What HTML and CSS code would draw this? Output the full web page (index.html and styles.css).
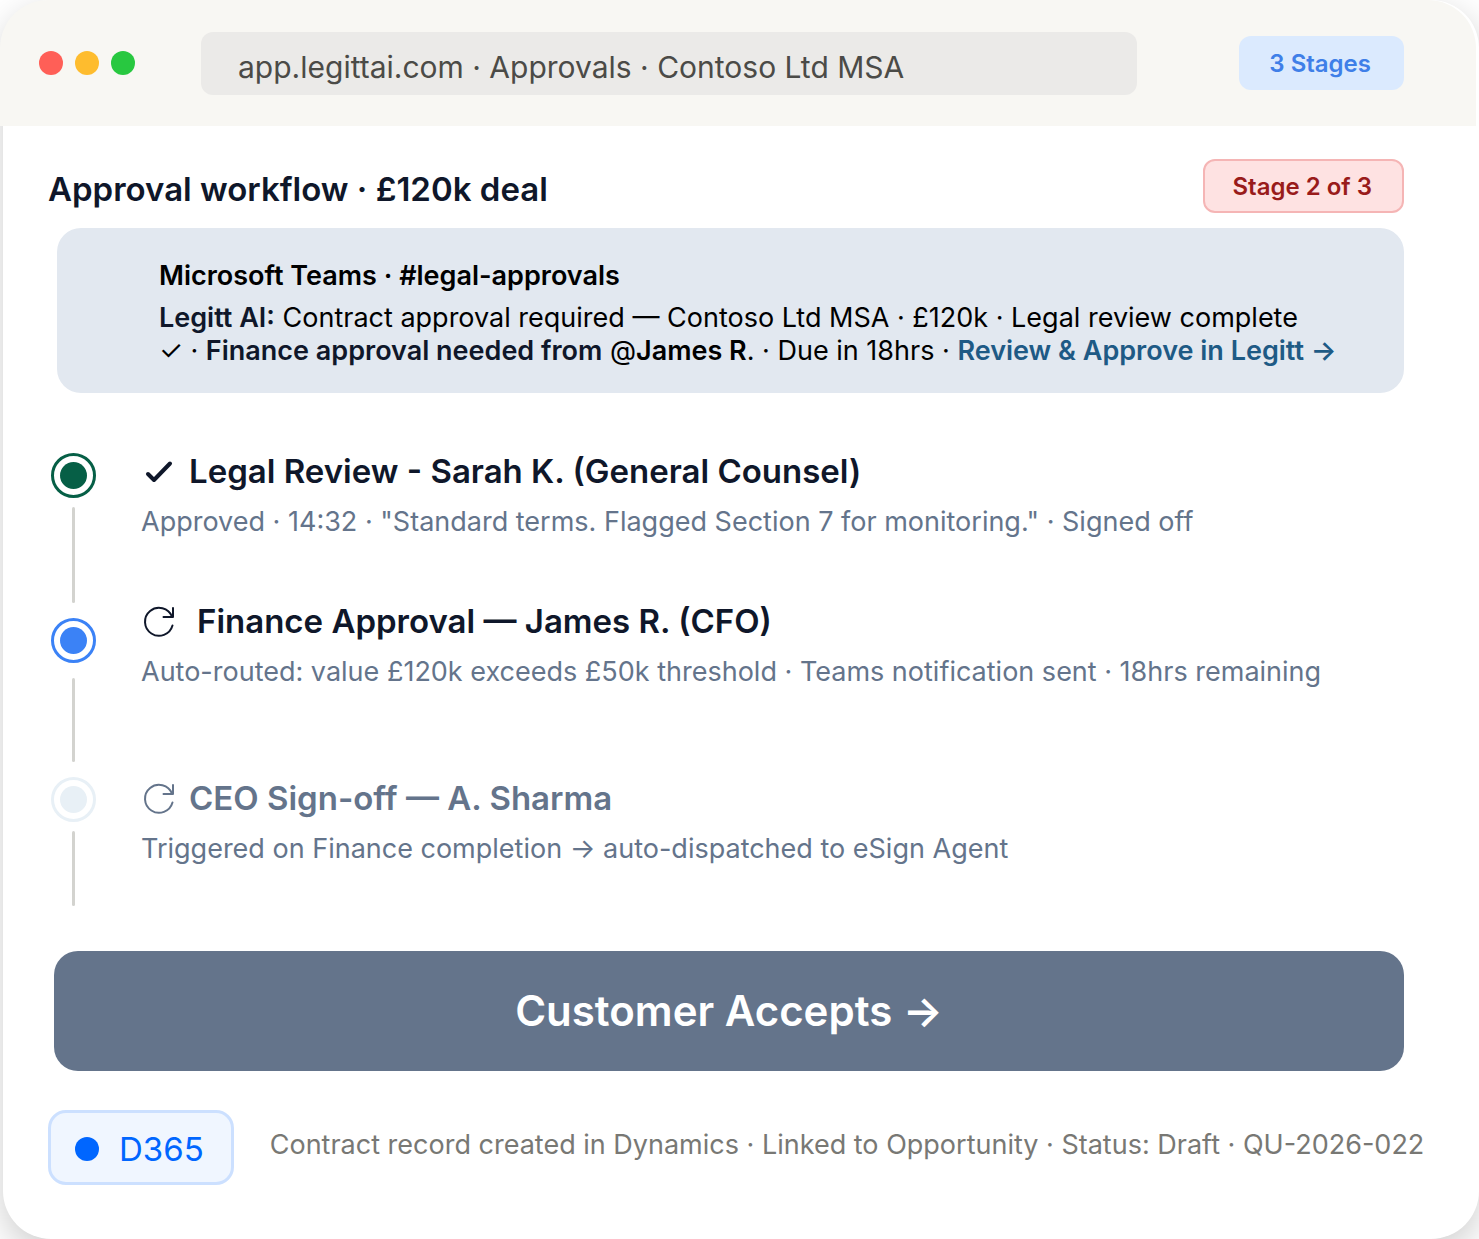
FILE: index.html
```html
<!DOCTYPE html>
<html lang="en">
<head>
<meta charset="utf-8">
<meta name="viewport" content="width=device-width, initial-scale=1">
<title>Approvals · Contoso Ltd MSA</title>
<link rel="stylesheet" href="styles.css">
</head>
<body>
<div class="window">
  <header class="topbar">
    <div class="lights">
      <span class="light red"></span>
      <span class="light yellow"></span>
      <span class="light green"></span>
    </div>
    <div class="address">app.legittai.com · Approvals · Contoso Ltd MSA</div>
    <span class="chip chip-blue">3 Stages</span>
  </header>

  <main class="content">
    <div class="heading">
      <h1>Approval workflow · £120k deal</h1>
      <span class="chip chip-red">Stage 2 of 3</span>
    </div>

    <section class="message">
      <h2>Microsoft Teams · #legal-approvals</h2>
      <p><b>Legitt AI:</b> Contract approval required — Contoso Ltd MSA · £120k · Legal review complete<br>
      ✓ · <b>Finance approval needed from</b> @<strong>James R</strong>. · Due in 18hrs · <a href="#">Review &amp; Approve in Legitt →</a></p>
    </section>

    <section class="timeline">
      <div class="rail">
        <span class="dot done"></span>
        <span class="line line-long"></span>
        <span class="dot active"></span>
        <span class="line line-mid"></span>
        <span class="dot waiting"></span>
        <span class="line line-end"></span>
      </div>
      <ol class="steps">
        <li class="step">
          <h3>
            <svg class="icon" viewBox="0 0 36 36"><path d="M7 20l6 6L29 9.500" stroke-width="4"/></svg>
            Legal Review - Sarah K. (General Counsel)
          </h3>
          <p>Approved · 14:32 · "Standard terms. Flagged Section 7 for monitoring." · Signed off</p>
        </li>
        <li class="step current">
          <h3>
            <svg class="icon" viewBox="0 0 36 36"><path d="M31.500 21.500A14 14 0 1 1 31 12.500M32 4v9h-9.500" stroke-width="2"/></svg>
            Finance Approval — James R. (CFO)
          </h3>
          <p>Auto-routed: value £120k exceeds £50k threshold · Teams notification sent · 18hrs remaining</p>
        </li>
        <li class="step pending">
          <h3>
            <svg class="icon" viewBox="0 0 36 36"><path d="M31.500 21.500A14 14 0 1 1 31 12.500M32 4v9h-9.500" stroke-width="2"/></svg>
            CEO Sign-off — A. Sharma
          </h3>
          <p>Triggered on Finance completion → auto-dispatched to eSign Agent</p>
        </li>
      </ol>
    </section>

    <button type="button" class="accept">Customer Accepts →</button>
  </main>

  <footer class="record">
    <span class="source"><span class="source-dot"></span>D365</span>
    <p>Contract record created in Dynamics · Linked to Opportunity · Status: Draft · QU-2026-022</p>
  </footer>
</div>
</body>
</html>
```
FILE: styles.css
```css
* {
  box-sizing: border-box;
}
body {
  margin: 0;
  background: #fff;
  font-family: Inter, "Liberation Sans", sans-serif;
  font-size: 27px;
  line-height: 33px;
  color: #000;
}
h1, h2, h3, p, ol {
  margin: 0;
  padding: 0;
}
.window {
  margin-left: 3px;
  padding-bottom: 54px;
  border-radius: 48px;
  background: #fff;
  box-shadow: 0 12px 36px rgba(0, 0, 0, 0.2);
}

/* browser bar */
.topbar {
  display: flex;
  align-items: center;
  height: 126px;
  margin: 0 3px 0 -3px;
  padding: 0 72px 0 39px;
  border-radius: 48px 48px 0 0;
  background: #f8f7f3;
}
.lights {
  display: flex;
  gap: 12px;
  margin-right: 66px;
}
.light {
  width: 24px;
  height: 24px;
  border-radius: 50%;
}
.red {
  background: #ff5f57;
}
.yellow {
  background: #febc2e;
}
.green {
  background: #28c840;
}
.address {
  flex: 1;
  margin-right: 102px;
  padding: 19px 37px 12px;
  border-radius: 12px;
  background: #ebeae8;
  color: #4b4b47;
  font-size: 30px;
  line-height: 32px;
}
.chip {
  padding: 13px 33px 11px 30px;
  border-radius: 12px;
  font-size: 24px;
  line-height: 30px;
  font-weight: 600;
}
.chip-blue {
  background: #dbeafe;
  color: #3f7fe8;
}
.chip-red {
  padding: 11px 30px 9px 28px;
  border: 2px solid #f5b5b5;
  background: #fee2e2;
  color: #991b1b;
}

.content {
  padding: 33px 75px 0 45px;
}
.heading {
  display: flex;
  align-items: center;
  justify-content: space-between;
  margin-bottom: 15px;
}
.heading h1 {
  padding-top: 6px;
  color: #0f172a;
  font-size: 33px;
  line-height: 42px;
  font-weight: 600;
}

/* teams message */
.message {
  margin-left: 9px;
  padding: 31px 60px 26px 102px;
  border-radius: 24px;
  background: #e2e8f0;
}
.message h2 {
  margin-bottom: 9px;
  font-size: 27px;
  line-height: 33px;
  font-weight: 600;
}
.message b {
  color: #0f172a;
  font-weight: 600;
}
.message strong {
  font-weight: 600;
}
.message a {
  color: #1e5a85;
  font-weight: 600;
  text-decoration: none;
}

/* approval steps */
.timeline {
  display: flex;
  gap: 45px;
  margin: 60px 0 45px 3px;
}
.rail {
  display: flex;
  flex-direction: column;
  align-items: center;
}
.dot {
  width: 45px;
  height: 45px;
  padding: 6px;
  border: 3px solid;
  border-radius: 50%;
  background: currentColor content-box;
}
.done {
  color: #065f46;
}
.active {
  color: #3b82f6;
}
.waiting {
  color: #e8f0f6;
}
.line {
  width: 3px;
  border-radius: 2px;
  background: #d3d3cf;
}
.line-long {
  height: 96px;
  margin: 9px 0 15px;
}
.line-mid {
  height: 84px;
  margin: 15px 0;
}
.line-end {
  height: 75px;
  margin-top: 9px;
}
.steps {
  flex: 1;
  list-style: none;
}
.step {
  margin-bottom: 65px;
}
.step h3 {
  display: flex;
  align-items: center;
  gap: 12px;
  margin-bottom: 15px;
  color: #0f172a;
  font-size: 33px;
  line-height: 37px;
  font-weight: 600;
}
.step p {
  color: #64748b;
}
.current h3 {
  gap: 20px;
}
.current {
  margin-bottom: 92px;
}
.pending {
  margin-bottom: 0;
}
.pending h3 {
  color: #64748b;
}
.icon {
  width: 36px;
  height: 36px;
  fill: none;
  stroke: currentColor;
  stroke-linecap: round;
  stroke-linejoin: round;
}

.accept {
  display: block;
  width: calc(100% - 6px);
  margin-left: 6px;
  padding: 33px;
  border: none;
  border-radius: 24px;
  background: #64748b;
  color: #fff;
  font-family: inherit;
  font-size: 42px;
  line-height: 54px;
  font-weight: 600;
}

/* CRM record */
.record {
  display: flex;
  align-items: center;
  gap: 36px;
  padding: 39px 45px 0;
}
.record p {
  padding-bottom: 6px;
  color: #787874;
}
.source {
  display: flex;
  align-items: center;
  gap: 20px;
  padding: 18px 27px 15px 24px;
  border: 3px solid #cce0ff;
  border-radius: 18px;
  background: #f0f6ff;
  color: #0066ff;
  font-size: 33px;
  line-height: 36px;
}
.source-dot {
  width: 24px;
  height: 24px;
  border-radius: 50%;
  background: #0066ff;
}
```
